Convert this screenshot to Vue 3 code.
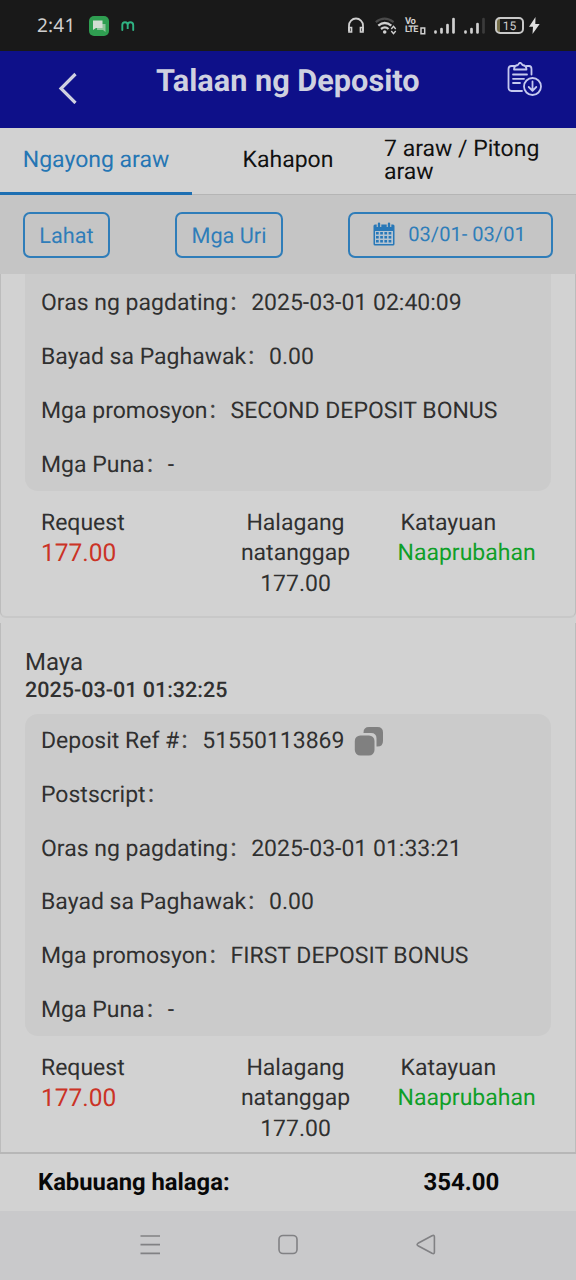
<script setup>
const records = [
  {
    id: 1,
    clipped: true,
    rows: [
      { label: 'Oras ng pagdating', value: '2025-03-01 02:40:09' },
      { label: 'Bayad sa Paghawak', value: '0.00' },
      { label: 'Mga promosyon', value: 'SECOND DEPOSIT BONUS' },
      { label: 'Mga Puna', value: '-' },
    ],
  },
  {
    id: 2,
    method: 'Maya',
    date: '2025-03-01 01:32:25',
    rows: [
      { label: 'Deposit Ref #', value: '51550113869', copy: true },
      { label: 'Postscript', value: '' },
      { label: 'Oras ng pagdating', value: '2025-03-01 01:33:21' },
      { label: 'Bayad sa Paghawak', value: '0.00' },
      { label: 'Mga promosyon', value: 'FIRST DEPOSIT BONUS' },
      { label: 'Mga Puna', value: '-' },
    ],
  },
]
const calendarRows = [10, 14, 18]
const calendarCols = [4, 8.2, 12.4, 16.6]
</script>

<template>
  <div class="screen">
    <div class="status">
      <span class="clock">2:41</span>
      <svg class="chat" width="20" height="20" viewBox="0 0 20 20">
        <rect width="20" height="20" rx="5" fill="#2f9e51" />
        <path d="M8 8h8.5v8l-2.5-2H8z" fill="#8fc59c" />
        <path d="M4 4.5h9.500v7.500H7l-3 2z" fill="#d3ddd3" />
      </svg>
      <svg class="brand" width="14" height="12" viewBox="0 0 14 12">
        <path d="M1.300 10V5q0-2.800 2.700-2.800T6.700 5v4V5q0-2.800 2.700-2.800T12.200 5v5" fill="none" stroke="#2fb383" stroke-width="1.900" stroke-linecap="round" />
      </svg>
      <div class="signals">
        <svg width="18" height="17" viewBox="0 0 18 17" fill="none" stroke="#cfcfcf" stroke-width="1.800">
          <path d="M2 14V8.500a7 7 0 0 1 14 0V14" />
          <path d="M2 10.500h2.500v4.500H2zM13.500 10.500H16v4.500h-2.500z" stroke-width="1.700" />
        </svg>
        <svg class="wifi" width="22" height="18" viewBox="0 0 22 18" fill="none">
          <path d="M.8 5.200q8.700-7 17.800 0" stroke="#4a4a4a" stroke-width="2.200" />
          <path d="M3.300 8.700q6.500-5.400 13 0M6 12q4-3.200 7.500 0" stroke="#d0d0d0" stroke-width="2.300" />
          <circle cx="9.700" cy="15" r="1.800" fill="#d0d0d0" />
          <path d="M16.300 12l2.200-2.700 2.200 2.700M16.300 14l2.200 2.700 2.200-2.700" stroke="#d0d0d0" stroke-width="1.400" />
        </svg>
        <span class="volte"><span>Vo</span><span class="lte">LTE</span></span>
        <svg class="sim" width="6" height="8" viewBox="0 0 6 8" fill="none" stroke="#d0d0d0" stroke-width="1.500"><path d="M1 1h3.700v5.800H1z" /></svg>
        <svg class="bars" width="22" height="18" viewBox="0 0 22 18" stroke="#d0d0d0" stroke-width="2.700" stroke-linecap="round">
          <path d="M1.500 14.500v1M7.500 12v3.500M13.500 8v7.500M19.500 2v13.500" />
        </svg>
        <svg class="bars second" width="22" height="18" viewBox="0 0 22 18" stroke="#d0d0d0" stroke-width="2.700" stroke-linecap="round">
          <path d="M1.500 14.500v1M7.500 12v3.500M13.500 7v8.500" />
          <path d="M19.500 2v13.500" stroke="#3b3b3b" />
        </svg>
        <span class="battery">15</span>
        <svg class="bolt" width="11" height="17" viewBox="0 0 11 17">
          <path d="M6.500 0L0 9.800h4L3.500 17 10.700 7H6.300z" fill="#e0e0e0" />
        </svg>
      </div>
    </div>

    <header class="header">
      <svg class="back" width="20" height="32" viewBox="0 0 20 32" fill="none" stroke="#cfd1e0" stroke-width="3.200">
        <path d="M18.500 2L4 16.500 18.500 31" />
      </svg>
      <h1>Talaan ng Deposito</h1>
      <svg class="export" width="36" height="36" viewBox="0 0 36 36" fill="none" stroke="#c5c9ef" stroke-width="1.800" stroke-linecap="round" stroke-linejoin="round">
        <path d="M7.500 4H4.500Q1.500 4 1.500 7v19q0 3 3 3H15M19.500 4h2.500q2.500 0 2.500 3v5.500" />
        <path d="M7 7.500q0-4 4-4.500 2-4.500 4.500 0 4 .5 4 4.500z" />
        <path d="M6 12.500h14M6 16.800h11M6 21h7" />
        <circle cx="25.500" cy="24.500" r="8.500" />
        <path d="M25.500 19.500v9M21.700 25l3.800 3.800 3.800-3.800" />
      </svg>
    </header>

    <nav class="tabs">
      <div class="tab active">Ngayong araw</div>
      <div class="tab">Kahapon</div>
      <div class="tab wide">7 araw / Pitong araw</div>
    </nav>

    <div class="filters">
      <div class="chip all">Lahat</div>
      <div class="chip kinds">Mga Uri</div>
      <div class="chip dates">
        <svg width="22" height="24" viewBox="0 0 22 24">
          <path d="M2 2.500h18q1.500 0 1.500 1.500v18q0 1.500-1.500 1.500H2Q.5 23.500.5 22V4Q.5 2.500 2 2.500z" fill="#2878b8" />
          <path d="M2 9h18v13H2z" fill="#b5c4d1" />
          <g fill="#2878b8">
            <template v-for="y in calendarRows" :key="y">
              <rect v-for="x in calendarCols" :key="x" :x="x - 1" :y="y" width="2.700" height="2.500" />
            </template>
          </g>
          <path d="M6 0v5M16 0v5" stroke="#c5c5c5" stroke-width="4.600" />
          <path d="M6 1.800v3M16 1.800v3" stroke="#2878b8" stroke-width="2.400" stroke-linecap="round" />
        </svg>
        <span>03/01- 03/01</span>
      </div>
    </div>

    <main class="list">
      <article v-for="r in records" :key="r.id" class="card" :class="{ clipped: r.clipped }">
        <div v-if="r.method" class="head">
          <div class="method">{{ r.method }}</div>
          <div class="date">{{ r.date }}</div>
        </div>
        <div class="panel">
          <div v-for="row in r.rows" :key="row.label" class="row">
            <span>{{ row.label }}</span><span class="colon">：</span><span>{{ row.value }}</span>
            <svg v-if="row.copy" class="copy" width="30" height="30" viewBox="0 0 30 30" fill="#808080">
              <path d="M9.500 7V6.500Q9.500 1 15 1h8.500Q29 1 29 6.500v8.500q0 5.500-5.500 5.500h-1V12.500q0-5.500-5.500-5.500z" />
              <rect x=".8" y="9.500" width="19.700" height="20" rx="5.500" />
            </svg>
          </div>
        </div>
        <div class="stats">
          <div class="request">Request<b>177.00</b></div>
          <div class="received">Halagang natanggap <span>177.00</span></div>
          <div class="state"><span>Katayuan</span><b>Naaprubahan</b></div>
        </div>
      </article>
    </main>

    <footer class="total">
      <span class="label">Kabuuang halaga:</span>
      <span class="sum">354.00</span>
    </footer>

    <div class="system">
      <svg width="20" height="22" viewBox="0 0 20 22" stroke="#818184" stroke-width="1.700"><path d="M.5 2H20M.5 10.700H20M.5 19.400H20" /></svg>
      <svg width="20" height="22" viewBox="0 0 20 22" fill="none" stroke="#818184" stroke-width="1.600"><rect x="1" y="1.500" width="18" height="18" rx="4" /></svg>
      <svg width="20" height="22" viewBox="0 0 20 22" fill="none" stroke="#818184" stroke-width="1.600" stroke-linejoin="round"><path d="M2 9.300L16 1.700q2.400-1 2.400 1v15.600q0 2-2.400 1L2 11.700q-1.800-1.200 0-2.400z" /></svg>
    </div>
  </div>
</template>

<style>
body {
  background: #c9c9cb;
}
</style>

<style scoped>
.screen {
  width: 576px;
  height: 1280px;
  display: flex;
  flex-direction: column;
  overflow: hidden;
  background: #d2d2d2;
  color: #303030;
  font-family: Roboto, "Noto Sans CJK SC", sans-serif;
  font-size: 23px;
  text-rendering: geometricPrecision;
  white-space: nowrap;
}
.status {
  box-sizing: border-box;
  height: 51px;
  flex: none;
  display: flex;
  align-items: center;
  padding: 0 36px 0 37px;
  background: #191919;
  color: #cfcfcf;
}
.clock {
  width: 52px;
  font-family: "Noto Sans", sans-serif;
  font-size: 19px;
  line-height: 24px;
  margin-top: -1px;
  letter-spacing: 0.2px;
}
.brand {
  margin-left: 12px;
}
.signals {
  display: flex;
  align-items: center;
  margin-left: auto;
}
.wifi {
  margin-left: 10px;
}
.volte {
  width: 15px;
  margin-left: 8px;
  font-size: 9.500px;
  line-height: 9px;
  font-weight: 700;
  letter-spacing: -0.6px;
  display: flex;
  flex-direction: column;
}
.lte {
  font-size: 9px;
}
.sim {
  align-self: flex-end;
}
.bars {
  margin-left: 8px;
}
.second {
  margin-left: 8px;
}
.battery {
  box-sizing: border-box;
  width: 29px;
  height: 17px;
  margin-left: 9px;
  border: 2px solid #c8c8c8;
  border-radius: 5px;
  background: linear-gradient(90deg, #77704a 3px, transparent 3px);
  font-size: 12px;
  line-height: 14px;
  text-align: center;
}
.bolt {
  margin-left: 5px;
}
.header {
  height: 77px;
  flex: none;
  display: grid;
  grid-template-columns: 156px 1fr 70px;
  background: #0e1089;
  color: #cfd1e0;
}
.back {
  margin: 21px 0 0 57px;
}
.header h1 {
  margin: 13px 0 0;
  font-size: 30.700px;
  line-height: 36px;
  font-weight: 700;
}
.export {
  margin: 11px 0 0 1px;
}
.tabs {
  box-sizing: border-box;
  height: 67px;
  flex: none;
  display: grid;
  grid-template-columns: repeat(3, 1fr);
  border-bottom: 1px solid #b5b5b5;
  color: #111;
  line-height: 23px;
}
.tab {
  display: flex;
  align-items: center;
  justify-content: center;
  box-sizing: border-box;
  height: 67px;
  padding-bottom: 1px;
  border-bottom: 3px solid transparent;
}
.active {
  color: #2576b4;
  border-color: #1d6fb2;
}
.wide {
  padding: 0 30px 1px 0;
  white-space: normal;
}
.filters {
  box-sizing: border-box;
  height: 79px;
  flex: none;
  display: flex;
  align-items: flex-start;
  justify-content: space-between;
  padding: 17px 23px 0;
  background: #c5c5c5;
}
.chip {
  box-sizing: border-box;
  height: 46px;
  display: flex;
  align-items: center;
  justify-content: center;
  border: 2px solid #2f7db9;
  border-radius: 7px;
  color: #2f7db9;
  font-size: 21.700px;
  padding-top: 2px;
}
.all {
  width: 87px;
}
.kinds {
  width: 108px;
}
.dates {
  width: 205px;
  gap: 13px;
  font-size: 20.100px;
  padding: 0 2px 2px 0;
}
.list {
  height: 878px;
  flex: none;
  display: flex;
  flex-direction: column;
  overflow: hidden;
}
.card {
  box-sizing: border-box;
  height: 529px;
  padding: 0 24px;
  border: solid #bcbcbc;
  border-width: 0 1px;
}
.clipped {
  height: 344px;
  border-bottom: 2px solid #c8c8c8;
  border-radius: 0 0 6px 6px;
  margin-bottom: 5px;
}
.head {
  height: 91px;
  box-sizing: border-box;
  padding-top: 25px;
}
.method {
  line-height: 28px;
  font-size: 24px;
}
.date {
  line-height: 29px;
  font-size: 21.500px;
  font-weight: 500;
}
.panel {
  box-sizing: border-box;
  height: 322px;
  border-radius: 13px;
  background: #cbcbcb;
}
.clipped .panel {
  height: 217px;
  padding-top: 2.300px;
  border-radius: 0 0 13px 13px;
}
.row {
  display: flex;
  align-items: center;
  height: 53.800px;
  line-height: 53.800px;
  padding-left: 16px;
}
.colon {
  width: 23px;
  font-size: 21px;
  color: #454545;
  padding-top: 3px;
  line-height: 50.800px;
}
.copy {
  margin-left: 10px;
}
.stats {
  display: flex;
  padding: 16.500px 0 0 16px;
  line-height: 30.500px;
}
.stats b {
  display: block;
  font-weight: 400;
}
.request {
  width: 191.500px;
}
.request b {
  color: #cb3326;
  font-size: 24.500px;
}
.received {
  width: 126px;
  white-space: normal;
  text-align: center;
}
.state {
  margin-left: 39px;
}
.state span {
  margin-left: 3px;
}
.state b {
  color: #0f9f28;
}
.total {
  box-sizing: border-box;
  height: 59px;
  flex: none;
  display: flex;
  border-top: 2px solid #b7b7b7;
  padding-left: 38px;
  line-height: 56px;
  font-weight: 700;
  color: #080808;
}
.label {
  width: 385.500px;
  font-size: 23.800px;
}
.sum {
  font-size: 24px;
}
.system {
  flex: 1;
  display: flex;
  align-items: center;
  justify-content: center;
  gap: 118px;
  padding-bottom: 1px;
  background: #c9c9cb;
}
</style>
